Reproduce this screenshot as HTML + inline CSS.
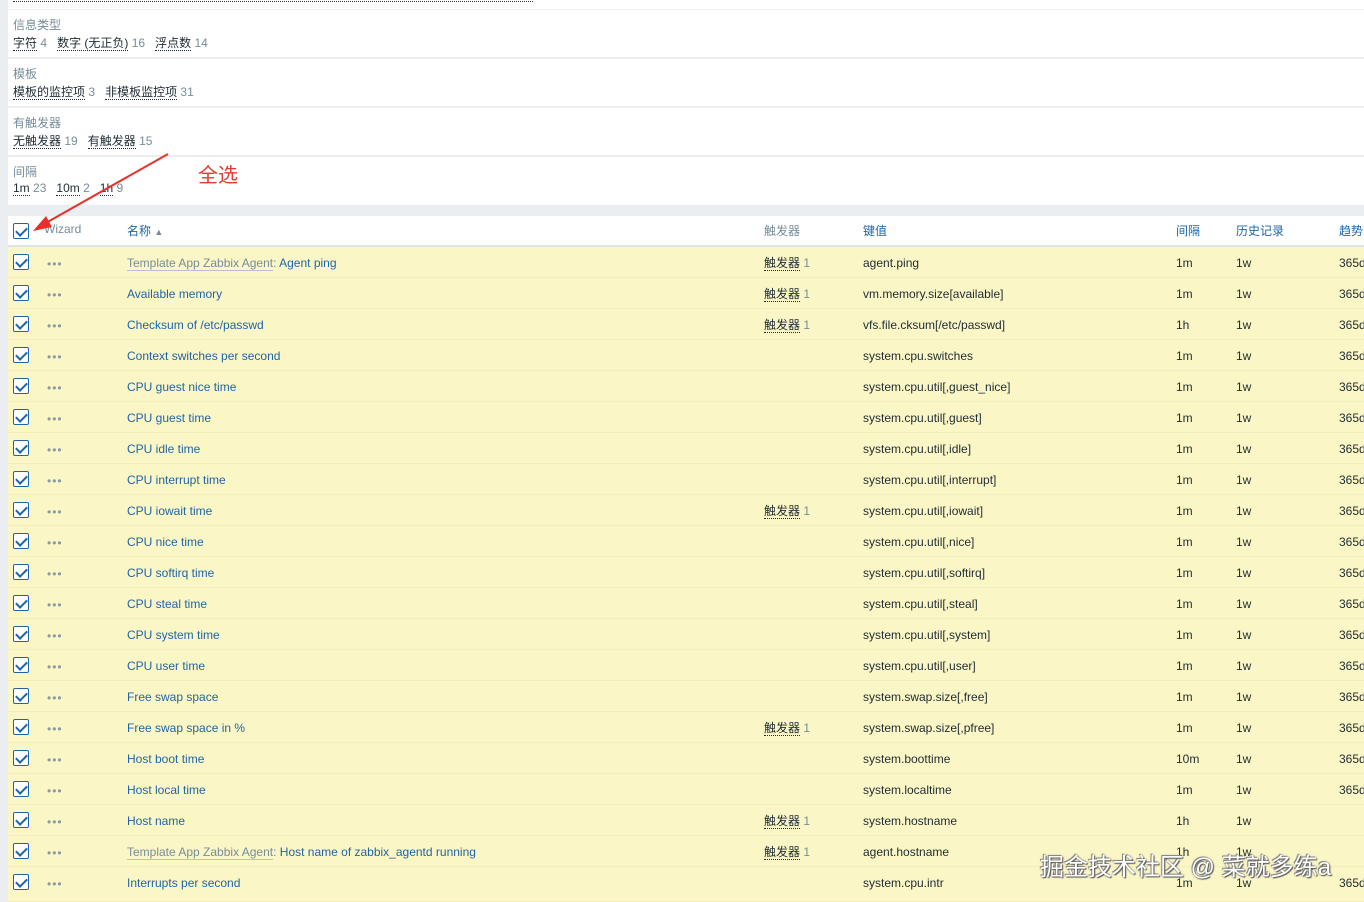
<!DOCTYPE html>
<html><head><meta charset="utf-8"><style>
*{margin:0;padding:0;box-sizing:border-box}
body{width:1364px;height:902px;overflow:hidden;background:#ebeef0;font-family:"Liberation Sans","Noto Sans CJK SC",sans-serif;font-size:12px;color:#1f2c33;position:relative}
.panel{position:absolute;left:8px;right:0;background:#fff}
.sec{position:absolute;left:8px;right:0;height:48px;background:#fff;border-top:1px solid #eceff1}
.sec .t{position:absolute;left:5px;top:6px;color:#768d99}
.sec .v{position:absolute;left:5px;top:24px}
.u{border-bottom:1px dotted #1f2c33}
.g{color:#768d99}
.hdr{position:absolute;left:8px;right:0;top:216px;height:31px;background:#fff;border-bottom:2px solid #dfe4e7}
.hdr .a{top:6px}
.a{position:absolute;white-space:nowrap}
.cb{position:absolute;left:5px;width:16px;height:16px;border:1px solid #1f65a6;background:#fff;border-radius:2px}
.cb:after{content:"";position:absolute;left:4px;top:1px;width:5px;height:9px;border:solid #1f65a6;border-width:0 2px 2px 0;transform:rotate(45deg)}
.row{position:absolute;left:8px;right:0;height:31px;background:#fbf6c6;border-bottom:1px solid #f3eeb9}
.row>*{position:absolute;top:9px;white-space:nowrap}
.row .cb{top:7px}
.row .tr{top:7px}
.dots{left:39px;color:#8a9aa3;font-size:12px;letter-spacing:1px;top:10px!important}
.l{color:#1f65a6}
.tp{color:#768d99;border-bottom:1px solid #b8c2c8}
.h{color:#1f65a6}
</style></head><body>
<div class="panel" style="top:0;height:9px"></div>
<div class="a" style="left:13px;top:0;width:520px;height:2px;border-bottom:1px dotted #333"></div>
<div class="sec" style="top:9px"><div class="t">信息类型</div><div class="v"><span class="u">字符</span> <span class="g">4</span>&nbsp;&nbsp; <span class="u">数字 (无正负)</span> <span class="g">16</span>&nbsp;&nbsp; <span class="u">浮点数</span> <span class="g">14</span></div></div>
<div class="sec" style="top:58px"><div class="t">模板</div><div class="v"><span class="u">模板的监控项</span> <span class="g">3</span>&nbsp;&nbsp; <span class="u">非模板监控项</span> <span class="g">31</span></div></div>
<div class="sec" style="top:107px"><div class="t">有触发器</div><div class="v"><span class="u">无触发器</span> <span class="g">19</span>&nbsp;&nbsp; <span class="u">有触发器</span> <span class="g">15</span></div></div>
<div class="sec" style="top:156px;height:49px"><div class="t">间隔</div><div class="v"><span class="u">1m</span> <span class="g">23</span>&nbsp;&nbsp; <span class="u">10m</span> <span class="g">2</span>&nbsp;&nbsp; <span class="u">1h</span> <span class="g">9</span></div></div>
<div class="hdr">
<div class="cb" style="top:7px"></div>
<div class="a g" style="left:36px">Wizard</div>
<div class="a h" style="left:119px">名称 <span style="color:#768d99;font-size:9px">▲</span></div>
<div class="a g" style="left:756px">触发器</div>
<div class="a h" style="left:855px">键值</div>
<div class="a h" style="left:1168px">间隔</div>
<div class="a h" style="left:1228px">历史记录</div>
<div class="a h" style="left:1331px">趋势</div>
</div>
<div id="rows">
<div class="row" style="top:247px"><div class="cb"></div><div class="dots">•••</div><div style="left:119px"><span class="tp">Template App Zabbix Agent</span><span class="g">:</span> <span class="l">Agent ping</span></div><div class="tr" style="left:756px"><span class="u">触发器</span> <span class="g">1</span></div><div style="left:855px">agent.ping</div><div style="left:1168px">1m</div><div style="left:1228px">1w</div><div style="left:1331px">365d</div></div>
<div class="row" style="top:278px"><div class="cb"></div><div class="dots">•••</div><div style="left:119px" class="l">Available memory</div><div class="tr" style="left:756px"><span class="u">触发器</span> <span class="g">1</span></div><div style="left:855px">vm.memory.size[available]</div><div style="left:1168px">1m</div><div style="left:1228px">1w</div><div style="left:1331px">365d</div></div>
<div class="row" style="top:309px"><div class="cb"></div><div class="dots">•••</div><div style="left:119px" class="l">Checksum of /etc/passwd</div><div class="tr" style="left:756px"><span class="u">触发器</span> <span class="g">1</span></div><div style="left:855px">vfs.file.cksum[/etc/passwd]</div><div style="left:1168px">1h</div><div style="left:1228px">1w</div><div style="left:1331px">365d</div></div>
<div class="row" style="top:340px"><div class="cb"></div><div class="dots">•••</div><div style="left:119px" class="l">Context switches per second</div><div style="left:855px">system.cpu.switches</div><div style="left:1168px">1m</div><div style="left:1228px">1w</div><div style="left:1331px">365d</div></div>
<div class="row" style="top:371px"><div class="cb"></div><div class="dots">•••</div><div style="left:119px" class="l">CPU guest nice time</div><div style="left:855px">system.cpu.util[,guest_nice]</div><div style="left:1168px">1m</div><div style="left:1228px">1w</div><div style="left:1331px">365d</div></div>
<div class="row" style="top:402px"><div class="cb"></div><div class="dots">•••</div><div style="left:119px" class="l">CPU guest time</div><div style="left:855px">system.cpu.util[,guest]</div><div style="left:1168px">1m</div><div style="left:1228px">1w</div><div style="left:1331px">365d</div></div>
<div class="row" style="top:433px"><div class="cb"></div><div class="dots">•••</div><div style="left:119px" class="l">CPU idle time</div><div style="left:855px">system.cpu.util[,idle]</div><div style="left:1168px">1m</div><div style="left:1228px">1w</div><div style="left:1331px">365d</div></div>
<div class="row" style="top:464px"><div class="cb"></div><div class="dots">•••</div><div style="left:119px" class="l">CPU interrupt time</div><div style="left:855px">system.cpu.util[,interrupt]</div><div style="left:1168px">1m</div><div style="left:1228px">1w</div><div style="left:1331px">365d</div></div>
<div class="row" style="top:495px"><div class="cb"></div><div class="dots">•••</div><div style="left:119px" class="l">CPU iowait time</div><div class="tr" style="left:756px"><span class="u">触发器</span> <span class="g">1</span></div><div style="left:855px">system.cpu.util[,iowait]</div><div style="left:1168px">1m</div><div style="left:1228px">1w</div><div style="left:1331px">365d</div></div>
<div class="row" style="top:526px"><div class="cb"></div><div class="dots">•••</div><div style="left:119px" class="l">CPU nice time</div><div style="left:855px">system.cpu.util[,nice]</div><div style="left:1168px">1m</div><div style="left:1228px">1w</div><div style="left:1331px">365d</div></div>
<div class="row" style="top:557px"><div class="cb"></div><div class="dots">•••</div><div style="left:119px" class="l">CPU softirq time</div><div style="left:855px">system.cpu.util[,softirq]</div><div style="left:1168px">1m</div><div style="left:1228px">1w</div><div style="left:1331px">365d</div></div>
<div class="row" style="top:588px"><div class="cb"></div><div class="dots">•••</div><div style="left:119px" class="l">CPU steal time</div><div style="left:855px">system.cpu.util[,steal]</div><div style="left:1168px">1m</div><div style="left:1228px">1w</div><div style="left:1331px">365d</div></div>
<div class="row" style="top:619px"><div class="cb"></div><div class="dots">•••</div><div style="left:119px" class="l">CPU system time</div><div style="left:855px">system.cpu.util[,system]</div><div style="left:1168px">1m</div><div style="left:1228px">1w</div><div style="left:1331px">365d</div></div>
<div class="row" style="top:650px"><div class="cb"></div><div class="dots">•••</div><div style="left:119px" class="l">CPU user time</div><div style="left:855px">system.cpu.util[,user]</div><div style="left:1168px">1m</div><div style="left:1228px">1w</div><div style="left:1331px">365d</div></div>
<div class="row" style="top:681px"><div class="cb"></div><div class="dots">•••</div><div style="left:119px" class="l">Free swap space</div><div style="left:855px">system.swap.size[,free]</div><div style="left:1168px">1m</div><div style="left:1228px">1w</div><div style="left:1331px">365d</div></div>
<div class="row" style="top:712px"><div class="cb"></div><div class="dots">•••</div><div style="left:119px" class="l">Free swap space in %</div><div class="tr" style="left:756px"><span class="u">触发器</span> <span class="g">1</span></div><div style="left:855px">system.swap.size[,pfree]</div><div style="left:1168px">1m</div><div style="left:1228px">1w</div><div style="left:1331px">365d</div></div>
<div class="row" style="top:743px"><div class="cb"></div><div class="dots">•••</div><div style="left:119px" class="l">Host boot time</div><div style="left:855px">system.boottime</div><div style="left:1168px">10m</div><div style="left:1228px">1w</div><div style="left:1331px">365d</div></div>
<div class="row" style="top:774px"><div class="cb"></div><div class="dots">•••</div><div style="left:119px" class="l">Host local time</div><div style="left:855px">system.localtime</div><div style="left:1168px">1m</div><div style="left:1228px">1w</div><div style="left:1331px">365d</div></div>
<div class="row" style="top:805px"><div class="cb"></div><div class="dots">•••</div><div style="left:119px" class="l">Host name</div><div class="tr" style="left:756px"><span class="u">触发器</span> <span class="g">1</span></div><div style="left:855px">system.hostname</div><div style="left:1168px">1h</div><div style="left:1228px">1w</div></div>
<div class="row" style="top:836px"><div class="cb"></div><div class="dots">•••</div><div style="left:119px"><span class="tp">Template App Zabbix Agent</span><span class="g">:</span> <span class="l">Host name of zabbix_agentd running</span></div><div class="tr" style="left:756px"><span class="u">触发器</span> <span class="g">1</span></div><div style="left:855px">agent.hostname</div><div style="left:1168px">1h</div><div style="left:1228px">1w</div></div>
<div class="row" style="top:867px;height:35px"><div class="cb"></div><div class="dots">•••</div><div style="left:119px" class="l">Interrupts per second</div><div style="left:855px">system.cpu.intr</div><div style="left:1168px">1m</div><div style="left:1228px">1w</div><div style="left:1331px">365d</div></div>
</div>
<div class="a" style="left:198px;top:159px;color:#e53a32;font-size:20px">全选</div>
<svg class="a" style="left:0;top:0" width="300" height="260"><line x1="168" y1="154" x2="44" y2="224" stroke="#e8302a" stroke-width="2"/><polygon points="33,231 46,216 52,227" fill="#e8302a"/></svg>
<div class="a" style="left:1040px;top:847px;font-size:24px;color:#fff;text-shadow:1px 1px 1px #555,-1px -1px 0 #888,0 0 2px #666">掘金技术社区 @ 菜就多练a</div>
</body></html>
